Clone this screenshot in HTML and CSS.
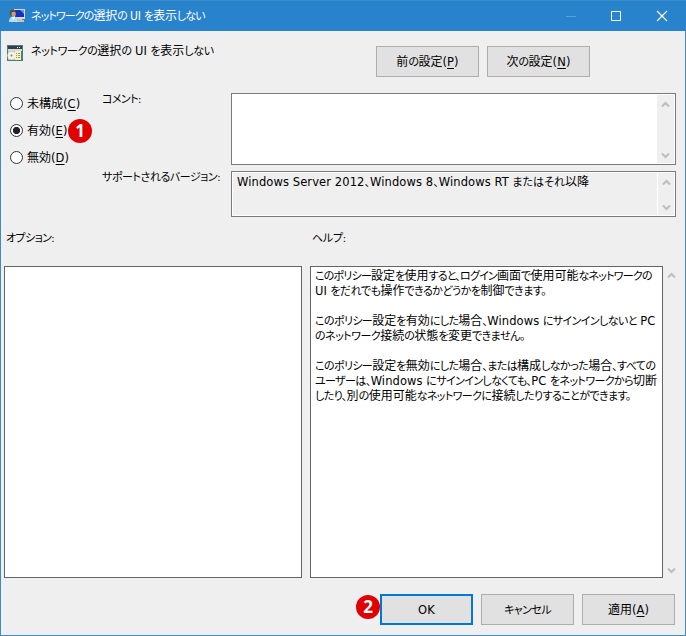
FILE: index.html
```html
<!DOCTYPE html>
<html lang="ja">
<head>
<meta charset="utf-8">
<title>ネットワークの選択の UI を表示しない</title>
<link rel="stylesheet" href="styles.css">
</head>
<body>
<svg class="defs" width="0" height="0">
  <symbol id="up" viewBox="0 0 9 7"><path d="M1 5.500 4.500 2 8 5.500" fill="none" stroke="#bdbdbd" stroke-width="2"/></symbol>
  <symbol id="down" viewBox="0 0 9 7"><path d="M1 1.500 4.500 5 8 1.500" fill="none" stroke="#bdbdbd" stroke-width="2"/></symbol>
</svg>
<div class="window">
  <header class="titlebar">
    <svg class="app-icon" width="16" height="16" viewBox="0 0 16 16">
      <path d="M5 1h11v10H5z" fill="#dcdad0"/>
      <path d="M6 2h9v7H6z" fill="#1233b8"/>
      <path d="M11 2h4v4z" fill="#6a8df0"/>
      <path d="M9 11h4v1H9zM8 12h7v2H8z" fill="#c9c6b8"/>
      <circle cx="4" cy="5" r="3.200" fill="#5b4a3c"/>
      <circle cx="4.600" cy="6" r="2.300" fill="#c99f7c"/>
      <path d="M0 14c0-4 2-5.500 4.500-5.500S9 10 9 14z" fill="#b8dcf2"/>
      <path d="M3 9l1.500 3L6 9z" fill="#fff"/>
    </svg>
    <span class="caption"><i>ネットワークの</i>選択<i>の</i> UI <i>を</i>表示<i>しない</i></span>
    <svg class="controls" width="104" height="12" viewBox="0 0 104 12">
      <path d="M1 6.500h10" stroke="#5b9fdb"/>
      <path d="M46.500 1.500h9v9h-9z" fill="none" stroke="#fff"/>
      <path d="M92 1l10 10M102 1 92 11" stroke="#fff" stroke-width="1.200"/>
    </svg>
  </header>

  <section class="heading">
    <svg width="16" height="16" viewBox="0 0 16 16">
      <path d="M0 0h16v16H0z" fill="#477f80"/>
      <path d="M1 1h14v3H1z" fill="#353b55"/>
      <path d="M10 2h1v1h-1zM12 2h1v1h-1z" fill="#fff"/>
      <path d="M1 4h14v2H1z" fill="#d9dcd4"/>
      <path d="M1 6h7v9H1z" fill="#b9c0b8"/>
      <circle cx="4.500" cy="10.500" r="4" fill="#f2f2e6"/>
      <circle cx="4.500" cy="10.500" r="1" fill="#78807c"/>
      <path d="M8 6h6v9H8z" fill="#f7efc0"/>
      <path d="M9 8h1v1H9zM11 8h2v1h-2zM9 10h1v1H9zM11 10h2v1h-2zM9 12h1v1H9zM11 12h2v1h-2z" fill="#a1946a"/>
    </svg>
    <span class="policy"><i>ネットワークの</i>選択<i>の</i> <b>UI</b> <i>を</i>表示<i>しない</i></span>
    <div class="nav">
      <button>前<i>の</i>設定<b>(<u>P</u>)</b></button>
      <button>次<i>の</i>設定<b>(<u>N</u>)</b></button>
    </div>
  </section>

  <section class="state">
    <div class="radios">
      <label><span class="radio"></span><span class="name">未構成<b>(<u>C</u>)</b></span></label>
      <label><span class="radio on"></span><span class="name">有効<b>(<u>E</u>)</b></span><span class="badge first">1</span></label>
      <label><span class="radio"></span><span class="name">無効<b>(<u>D</u>)</b></span></label>
    </div>
    <div class="fields">
      <span class="field-label"><i>コメント:</i></span>
      <div class="box comment"><div class="scroll"><svg><use href="#up"/></svg><svg><use href="#down"/></svg></div></div>
      <span class="field-label supported-label"><i>サポートされるバージョン:</i></span>
      <div class="box supported">
        <p><b>Windows Server 2012</b><i>、</i><b>Windows 8</b><i>、</i><b>Windows RT</b> <i>またはそれ</i>以降</p>
        <div class="scroll"><svg><use href="#up"/></svg><svg><use href="#down"/></svg></div>
      </div>
    </div>
  </section>

  <section class="panels">
    <span class="panel-label"><i>オプション:</i></span>
    <span class="panel-label help-label"><i>ヘルプ:</i></span>
    <div class="panel"></div>
    <div class="panel help">
      <p class="l1"><i>このポリシー</i>設定<i>を</i>使用<i>すると、ログイン</i>画面<i>で</i>使用可能<i>なネットワークの</i></p>
      <p class="l2"><b>UI</b> <i>をだれでも</i>操作<i>できるかどうかを</i>制御<i>できます。</i></p>
      <p class="gap"><i>このポリシー</i>設定<i>を</i>有効<i>にした</i>場合<i>、</i><b>Windows</b> <i>にサインインしないと</i> <b>PC</b></p>
      <p class="l2"><i>のネットワーク</i>接続<i>の</i>状態<i>を</i>変更<i>できません。</i></p>
      <p class="gap"><i>このポリシー</i>設定<i>を</i>無効<i>にした</i>場合<i>、または</i>構成<i>しなかった</i>場合<i>、すべての</i></p>
      <p><i>ユーザーは、</i><b>Windows</b> <i>にサインインしなくても、</i><b>PC</b> <i>をネットワークから</i>切断</p>
      <p><i>したり、</i>別<i>の</i>使用可能<i>なネットワークに</i>接続<i>したりすることができます。</i></p>
    </div>
    <div class="scroll bare"><svg><use href="#up"/></svg><svg><use href="#down"/></svg></div>
  </section>

  <footer class="actions">
    <button class="default"><b>OK</b><span class="badge second">2</span></button>
    <button><i>キャンセル</i></button>
    <button>適用<b>(<u>A</u>)</b></button>
  </footer>
</div>
</body>
</html>
```
FILE: styles.css
```css
* { box-sizing: border-box; }
body {
  margin: 0;
  font: 12px/15px "DejaVu Sans Condensed", "Noto Sans CJK JP", sans-serif;
  font-feature-settings: "palt";
  color: #000;
  white-space: nowrap;
}
.defs { display: block; height: 0; }
p { margin: 0; }
b { font: 400 11.5px/15px "DejaVu Sans", sans-serif; letter-spacing: .1px; }
/* kana are set tighter than kanji */
i { font-style: normal; font-size: 11px; letter-spacing: -.6px; }
u { text-underline-offset: 2px; text-decoration-thickness: 1px; }

.window {
  width: 686px;
  height: 636px;
  background: #efefef;
  border: 1px solid #3d8bcb;
  border-top: 0;
  display: flex;
  flex-direction: column;
}
.titlebar {
  height: 31px;
  margin: 0 -1px;
  padding: 0 17px 0 9px;
  background: #2882cc;
  border-top: 1px solid #3d8bcb;
  display: flex;
  align-items: center;
  color: #fff;
}
.caption { margin-left: 6px; padding-top: 1px; letter-spacing: -.2px; }
.caption i { letter-spacing: -.9px; }
.controls { margin-left: auto; }

.heading { height: 46px; padding: 14px 0 0 6px; display: flex; }
.policy { margin: -1px 0 0 8px; width: 345px; }
.policy i { letter-spacing: -.35px; }
.nav { display: flex; gap: 8px; margin-top: 1px; }
button {
  position: relative;
  font: inherit;
  font-feature-settings: inherit;
  color: #000;
  padding: 1px 0 0;
  height: 31px;
  width: 93px;
  background: #e1e1e1;
  border: 1px solid #adadad;
}
.nav button { width: 103px; }

.state { height: 140px; padding: 16px 9px 0 8px; display: flex; }
.radios { width: 93px; padding-top: 3px; }
.radios label { display: flex; align-items: center; height: 15px; margin-bottom: 12px; position: relative; }
.radio { width: 13px; height: 13px; border: 1px solid #333; border-radius: 50%; background: #fff; margin: 0 4px 0 1px; }
.radio.on { background: radial-gradient(circle, #222 3.2px, #fff 4px); }
.name { padding-top: 2px; }
.badge {
  position: absolute;
  width: 24px;
  height: 24px;
  border-radius: 50%;
  background: #e00000;
  color: #fff;
  font: 700 17px/24px "Noto Sans", sans-serif;
  text-align: center;
}
.badge.first { left: 59px; top: -4px; }
.badge.second { left: -26px; top: -1px; }

.fields { display: grid; grid-template-columns: 129px 445px; grid-template-rows: 72px 46px; row-gap: 6px; }
.field-label { margin-top: -1px; }
.supported-label i { letter-spacing: -.45px; }
.box { border: 1px solid #7a7a7a; box-shadow: inset 0 0 0 1px #fff; display: flex; padding: 1px; }
.comment { background: #fff; }
.supported { background: #efefef; }
.supported p { padding: 2px 0 0 4px; }
.supported i { letter-spacing: 0; }
.scroll {
  margin-left: auto;
  width: 17px;
  background: #efefef;
  display: flex;
  flex-direction: column;
  justify-content: space-between;
  align-items: center;
  padding: 6px 0 4px;
}
.supported .scroll { border-left: 1px solid #fff; }
.scroll svg { width: 9px; height: 7px; flex: none; }

.panels {
  height: 361px;
  padding: 14px 9px 0 3px;
  display: grid;
  grid-template-columns: 298px 353px 9px;
  grid-template-rows: 35px 312px;
  column-gap: 8px;
}
.panel-label { padding-left: 2px; }
.help-label { grid-column: 2 / 4; }
.help-label i { letter-spacing: -.3px; }
.panel { background: #fff; border: 1px solid #646464; }
.help { padding: 2px 0 0 4px; }
.help .l1 i { letter-spacing: -.78px; }
.help .l2 i { letter-spacing: -.52px; }
.help .gap { margin-top: 15px; }
.bare { width: 9px; margin-left: -4px; }

.actions { display: flex; justify-content: flex-end; gap: 8px; padding: 16px 10px 0 0; }
.default { border: 2px solid #0078d7; }
```
